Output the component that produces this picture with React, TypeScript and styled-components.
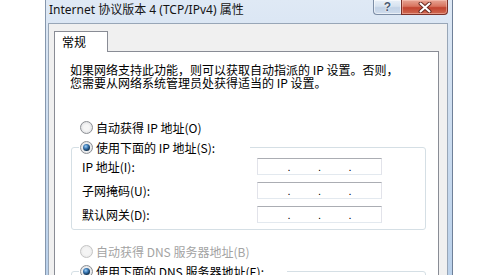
import React from 'react'
import styled, { createGlobalStyle } from 'styled-components'

const GlobalStyle = createGlobalStyle`
  html, body {
    margin: 0;
    padding: 0;
    background: #fff;
    overflow: hidden;
  }
  body {
    font-family: "Noto Sans CJK SC", "Noto Sans", sans-serif;
  }
`

const IpInput = () => (
	<IpBox>
		<span />
		<Dot>.</Dot>
		<span />
		<Dot>.</Dot>
		<span />
		<Dot>.</Dot>
		<span />
	</IpBox>
)

const Option = ({ label, checked = false, disabled = false, indent = true }: {
	label: string
	checked?: boolean
	disabled?: boolean
	indent?: boolean
}) => (
	<RadioRow $disabled={ disabled } $indent={ indent }>
		<Radio $checked={ checked } $disabled={ disabled } />
		<span>{ label }</span>
	</RadioRow>
)

const App = () => {
	return (
		<>
			<GlobalStyle />
			<Page>
				<Window>
					<TitleBar>
						<Title>Internet 协议版本 4 (TCP/IPv4) 属性</Title>
						<CaptionButtons>
							<HelpButton>?</HelpButton>
							<CloseButton>
								<svg width="14" height="11" viewBox="0 0 14 11">
									<path d="M2.5 1.5 L11.5 9.5 M11.5 1.5 L2.5 9.5" stroke="#6a2b22" strokeWidth="4" strokeLinecap="round" />
									<path d="M2.5 1.5 L11.5 9.5 M11.5 1.5 L2.5 9.5" stroke="#fff" strokeWidth="2" strokeLinecap="round" />
								</svg>
							</CloseButton>
						</CaptionButtons>
					</TitleBar>

					<DialogBody>
						<TabStrip>
							<Tab>常规</Tab>
						</TabStrip>
						<Panel>
							<Intro>
								如果网络支持此功能，则可以获取自动指派的 IP 设置。否则，<br />
								您需要从网络系统管理员处获得适当的 IP 设置。
							</Intro>

							<Option label='自动获得 IP 地址(O)' />
							<Group $top={ 7 }>
								<Legend $width={ 171 }>
									<Option label='使用下面的 IP 地址(S):' checked indent={ false } />
								</Legend>
								<Fields>
									<FieldLabel>IP 地址(I):</FieldLabel>
									<IpInput />
									<FieldLabel>子网掩码(U):</FieldLabel>
									<IpInput />
									<FieldLabel>默认网关(D):</FieldLabel>
									<IpInput />
								</Fields>
							</Group>

							<Spacer />
							<Option label='自动获得 DNS 服务器地址(B)' disabled />
							<Group $top={ 7 }>
								<Legend $width={ 208 }>
									<Option label='使用下面的 DNS 服务器地址(E):' checked indent={ false } />
								</Legend>
								<Fields>
									<FieldLabel>首选 DNS 服务器(P):</FieldLabel>
									<IpInput />
									<FieldLabel>备用 DNS 服务器(A):</FieldLabel>
									<IpInput />
								</Fields>
							</Group>
						</Panel>
					</DialogBody>
				</Window>
			</Page>
		</>
	)
}

export default App

const Page = styled.div`
  display: flex;
  padding-left: 45px;
`

const Window = styled.div`
  width: 408px;
  box-sizing: border-box;
  border-left: 1px solid #8697ad;
  border-right: 1px solid #6f8098;
  background: linear-gradient(to bottom, #dfe9f5 0px, #d4e2f2 70px, #b9d0ea 280px);
  padding-bottom: 4px;
`

const TitleBar = styled.div`
  height: 23px;
  display: flex;
  justify-content: space-between;
  align-items: flex-start;
  padding: 0 4px 0 3px;
`

const Title = styled.span`
  font-family: "Noto Sans", "Noto Sans CJK SC", sans-serif;
  font-size: 12px;
  line-height: 16px;
  padding-top: 2px;
  color: #141414;
`

const CaptionButtons = styled.div`
  display: flex;
  height: 15px;
`

const HelpButton = styled.div`
  width: 28px;
  box-sizing: border-box;
  border: 1px solid #7d8ea6;
  border-top: none;
  border-right: none;
  border-radius: 0 0 0 4px;
  background: linear-gradient(to bottom, #e9f0f8 0%, #d6e2ef 45%, #c2d2e6 55%, #cfdcec 100%);
  box-shadow: inset 0 0 0 1px rgba(255, 255, 255, 0.55);
  display: flex;
  align-items: center;
  justify-content: center;
  font-family: "Liberation Sans", sans-serif;
  font-weight: bold;
  font-size: 12px;
  color: #4a5b72;
  text-shadow: 0 0 2px #fff, 0 0 1px #fff;
`

const CloseButton = styled.div`
  width: 47px;
  box-sizing: border-box;
  border: 1px solid #7a3129;
  border-top: none;
  border-radius: 0 0 4px 0;
  background: linear-gradient(to bottom, #e7a595 0%, #d8745f 45%, #c2432f 55%, #d06a52 100%);
  box-shadow: inset 0 0 0 1px rgba(255, 210, 200, 0.45);
  display: flex;
  align-items: center;
  justify-content: center;
`

const DialogBody = styled.div`
  margin: 0 4px 0 2px;
  border: 1px solid #98a6b7;
  background: #f0f0f0;
  padding: 7px 8px 12px 5px;
`

const TabStrip = styled.div`
  display: flex;
  position: relative;
  z-index: 1;
`

const Tab = styled.div`
  width: 54px;
  height: 21px;
  box-sizing: border-box;
  border: 1px solid #898c95;
  border-bottom: none;
  background: #fff;
  padding-left: 7px;
  margin-bottom: -1px;
  font-size: 12px;
  line-height: 20px;
  color: #000;
`

const Panel = styled.div`
  border: 1px solid #898c95;
  background: #fff;
  padding: 11px 0 40px 15px;
`

const Intro = styled.p`
  margin: 0 0 32px;
  font-size: 12px;
  line-height: 13px;
  color: #000;
`

const RadioRow = styled.label<{ $disabled: boolean; $indent: boolean }>`
  display: flex;
  align-items: center;
  gap: 3px;
  height: 13px;
  margin-left: ${ p => p.$indent ? '10px' : '0' };
  font-size: 12px;
  line-height: 13px;
  white-space: nowrap;
  color: ${ p => p.$disabled ? '#a3a3a3' : '#000' };
`

const Radio = styled.span<{ $checked: boolean; $disabled: boolean }>`
  position: relative;
  flex: none;
  width: 13px;
  height: 13px;
  box-sizing: border-box;
  border-radius: 50%;
  border: 1px solid ${ p => p.$disabled ? '#c4c4c4' : '#8c8f94' };
  background: ${ p => p.$disabled
		? 'radial-gradient(circle at 50% 50%, #f4f4f4 40%, #e4e4e4 100%)'
		: 'radial-gradient(circle at 50% 50%, #f6f6f6 35%, #d4d6d9 100%)' };

  &::after {
    content: '';
    display: ${ p => p.$checked ? 'block' : 'none' };
    position: absolute;
    left: 2px;
    top: 2px;
    width: 7px;
    height: 7px;
    border-radius: 50%;
    background: radial-gradient(circle at 40% 35%, #9fd0f5 0%, #3b79b5 35%, #123250 70%, #0b1b2c 100%);
  }
`

const Group = styled.fieldset<{ $top: number }>`
  margin: ${ p => p.$top }px 0 0 1px;
  width: 355px;
  box-sizing: border-box;
  border: 1px solid #d5dfe5;
  border-radius: 3px;
  padding: 4px 7px 6px 7px;
  min-width: 0;
`

const Legend = styled.legend<{ $width: number }>`
  width: ${ p => p.$width }px;
  box-sizing: border-box;
  padding: 0 0 0 1px;
`

const Fields = styled.div`
  display: grid;
  grid-template-columns: 175px 125px;
  row-gap: 7px;
  align-items: center;
  margin-left: 3px;
`

const FieldLabel = styled.span`
  font-size: 12px;
  line-height: 14px;
  color: #000;
`

const IpBox = styled.div`
  height: 17px;
  box-sizing: border-box;
  border: 1px solid #e2e3ea;
  border-top-color: #abadb3;
  border-bottom-color: #e3e9ef;
  background: #fff;
  display: grid;
  grid-template-columns: 1fr auto 1fr auto 1fr auto 1fr;
  align-items: end;
  padding: 0 2px 2px 2px;
`

const Dot = styled.span`
  font-family: "Liberation Sans", sans-serif;
  font-size: 11px;
  line-height: 10px;
  color: #000;
`

const Spacer = styled.div`
  height: 15px;
`
